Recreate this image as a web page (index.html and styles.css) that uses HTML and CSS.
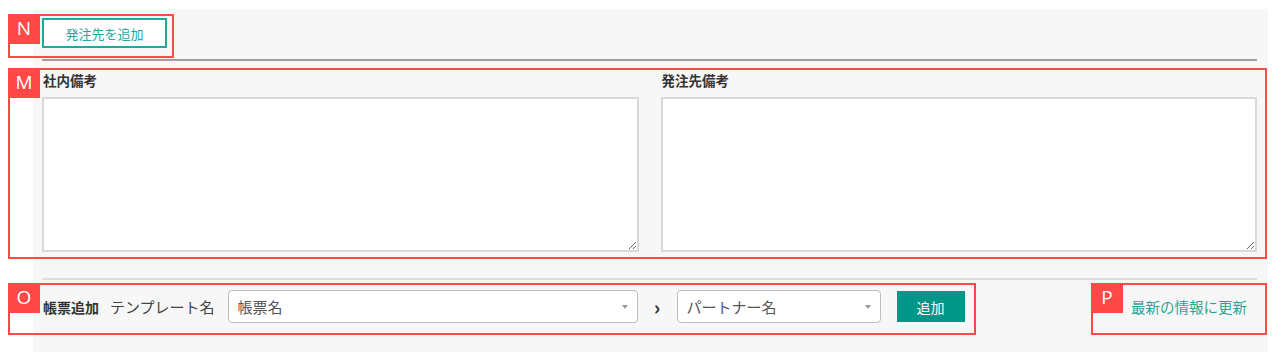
FILE: index.html
```html
<!DOCTYPE html>
<html lang="ja">
<head>
    <meta charset="UTF-8">
    <title>発注先</title>
    <link rel="stylesheet" href="styles.css">
</head>
<body>

<!-- Panel -->
<div class="panel">
    <div class="add-row">
        <button class="btn-outline">発注先を追加</button>
    </div>
    <div class="rule-dark"></div>

    <div class="notes">
        <div class="note">
            <label>社内備考</label>
            <textarea></textarea>
        </div>
        <div class="note">
            <label>発注先備考</label>
            <textarea></textarea>
        </div>
    </div>

    <div class="rule-light"></div>

    <div class="bottom-row">
        <div class="doc-add">
            <strong class="doc-title">帳票追加</strong>
            <span class="doc-label">テンプレート名</span>
            <div class="select select-wide">帳票名<span class="caret"></span></div>
            <span class="chev">›</span>
            <div class="select select-narrow">パートナー名<span class="caret"></span></div>
            <button class="btn-fill">追加</button>
        </div>
        <a class="refresh" href="#">最新の情報に更新</a>
    </div>
</div>

<!-- Annotations -->
<div class="mark mark-n"><span class="tag">N</span></div>
<div class="mark mark-m"><span class="tag">M</span></div>
<div class="mark mark-o"><span class="tag">O</span></div>
<div class="mark mark-p"><span class="tag">P</span></div>

</body>
</html>
```

FILE: styles.css
```css
/* General */
body {
    margin: 0;
    background-color: #FFFFFF;
    font-family: "Noto Sans CJK JP", "Noto Sans", sans-serif;
    color: #333333;
}

/* Panel */
.panel {
    margin: 9px 0 0 33px;
    width: 1235px;
    height: 343px;
    box-sizing: border-box;
    padding: 9px 11px 0 9px;
    background-color: #F7F7F7;
}

.add-row {
    display: flex;
}

.btn-outline {
    width: 125px;
    height: 30px;
    background-color: #FFFFFF;
    border: 2px solid #26A69A;
    color: #26A69A;
    font-family: inherit;
    font-size: 13px;
    padding: 0;
}

.rule-dark {
    margin-top: 11px;
    height: 2px;
    background-color: #9E9E9E;
}

/* Notes */
.notes {
    display: grid;
    grid-template-columns: 1fr 1fr;
    gap: 22px;
    margin-top: 10px;
}

.note label {
    display: block;
    font-size: 13.5px;
    font-weight: bold;
    line-height: 18px;
    margin: 0 0 8px 1px;
    color: #333333;
}

.note textarea {
    display: block;
    width: 100%;
    height: 155px;
    box-sizing: border-box;
    border: 2px solid #D9D9D9;
    background-color: #FFFFFF;
    margin: 0;
}

.rule-light {
    margin-top: 26px;
    height: 2px;
    background-color: #DEDEDE;
}

/* Bottom row */
.bottom-row {
    display: flex;
    justify-content: space-between;
    align-items: center;
    margin-top: 10px;
}

.doc-add {
    display: flex;
    align-items: center;
}

.doc-title {
    font-size: 14px;
    margin-left: 1px;
    color: #333333;
}

.doc-label {
    font-size: 15px;
    margin-left: 11px;
    color: #444444;
}

.select {
    position: relative;
    height: 33px;
    box-sizing: border-box;
    border: 1px solid #BDBDBD;
    border-radius: 4px;
    background-color: #FFFFFF;
    padding-left: 9px;
    font-size: 15px;
    line-height: 31px;
    color: #555555;
}

.select-wide {
    width: 410px;
    margin-left: 13px;
}

.select-narrow {
    width: 204px;
}

.caret {
    position: absolute;
    right: 9px;
    top: 14px;
    border-left: 3px solid transparent;
    border-right: 3px solid transparent;
    border-top: 4px solid #999999;
}

.chev {
    width: 39px;
    text-align: center;
    font-size: 20px;
    font-weight: bold;
    color: #333333;
    line-height: 20px;
}

.btn-fill {
    width: 68px;
    height: 31px;
    margin-left: 16px;
    background-color: #009688;
    border: none;
    color: #FFFFFF;
    font-family: inherit;
    font-size: 14px;
    padding: 0;
}

.refresh {
    font-size: 14.5px;
    color: #26A69A;
    text-decoration: none;
    margin-right: 10px;
}

/* Annotations */
.mark {
    position: absolute;
    border: 2px solid #FF4848;
    box-sizing: border-box;
}

.mark .tag {
    position: absolute;
    left: -2px;
    top: -2px;
    width: 32px;
    height: 30px;
    background-color: #FF4848;
    color: #FFFFFF;
    font-family: "Open Sans", "Noto Sans", sans-serif;
    font-size: 19px;
    line-height: 28px;
    text-align: center;
}

.mark-n { left: 8px; top: 14px; width: 166px; height: 44px; }
.mark-m { left: 8px; top: 68px; width: 1259px; height: 191px; }
.mark-o { left: 8px; top: 283px; width: 968px; height: 52px; }
.mark-p { left: 1091px; top: 283px; width: 176px; height: 52px; }
```
